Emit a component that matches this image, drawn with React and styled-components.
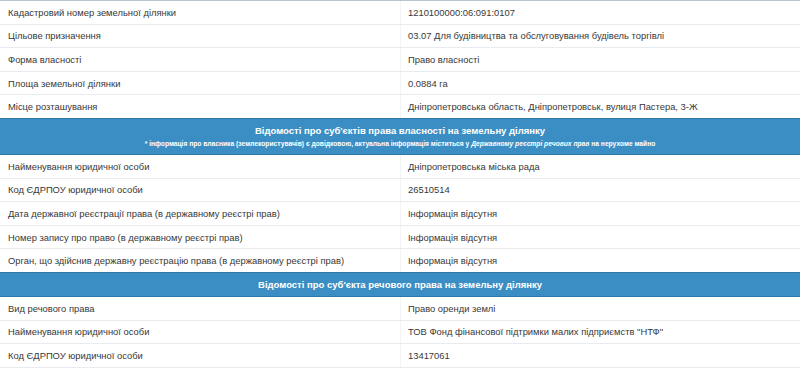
import React from "react";
import styled, { createGlobalStyle } from "styled-components";

const Global = createGlobalStyle`
  html, body { margin: 0; padding: 0; background: #ffffff; }
  body { font-family: "Liberation Sans", Arial, sans-serif; color: #383838; }
`;

const Table = styled.div`
  width: 800px;
  border-top: 1px solid #b9c6cf;
  font-size: 9.4px;
`;

const Row = styled.div`
  display: grid;
  grid-template-columns: 400px 1fr;
  border-bottom: 1px solid #e9ecee;
  height: 23.6px;
  box-sizing: border-box;
`;

const Cell = styled.div`
  padding: 0 7px 0 ${(p) => (p.$right ? "7px" : "8px")};
  display: flex;
  align-items: center;
  white-space: nowrap;
  border-left: ${(p) => (p.$right ? "1px solid #f1f3f4" : "none")};
`;

const Section = styled.div`
  background: #3b8ec3;
  border-top: 1px solid #2e78a6;
  border-bottom: 1px solid #2e78a6;
  color: #ffffff;
  text-align: center;
  display: flex;
  flex-direction: column;
  justify-content: center;
  box-sizing: border-box;
  height: ${(p) => p.$h}px;
  margin-top: -1px;
`;

const SectionTitle = styled.div`
  font-weight: bold;
  font-size: 9.5px;
  line-height: 13px;
`;

const SectionNote = styled.div`
  font-weight: bold;
  font-size: 6.7px;
  line-height: 9px;
  margin-top: 2px;
  em { font-style: italic; }
`;

const rows1 = [
  ["Кадастровий номер земельної ділянки", "1210100000:06:091:0107"],
  ["Цільове призначення", "03.07 Для будівництва та обслуговування будівель торгівлі"],
  ["Форма власності", "Право власності"],
  ["Площа земельної ділянки", "0.0884 га"],
  ["Місце розташування", "Дніпропетровська область, Дніпропетровськ, вулиця Пастера, 3-Ж"],
];

const rows2 = [
  ["Найменування юридичної особи", "Дніпропетровська міська рада"],
  ["Код ЄДРПОУ юридичної особи", "26510514"],
  ["Дата державної реєстрації права (в державному реєстрі прав)", "Інформація відсутня"],
  ["Номер запису про право (в державному реєстрі прав)", "Інформація відсутня"],
  ["Орган, що здійснив державну реєстрацію права (в державному реєстрі прав)", "Інформація відсутня"],
];

const rows3 = [
  ["Вид речового права", "Право оренди землі"],
  ["Найменування юридичної особи", "ТОВ Фонд фінансової підтримки малих підприємств \"НТФ\""],
  ["Код ЄДРПОУ юридичної особи", "13417061"],
];

const Rows = ({ data }) =>
  data.map(([k, v], i) => (
    <Row key={i}>
      <Cell>{k}</Cell>
      <Cell $right>{v}</Cell>
    </Row>
  ));

export default function App() {
  return (
    <>
      <Global />
      <Table>
        <Rows data={rows1} />
        <Section $h={37}>
          <SectionTitle>Відомості про суб'єктів права власності на земельну ділянку</SectionTitle>
          <SectionNote>
            * інформація про власника (землекористувачів) є довідковою, актуальна інформація міститься у{" "}
            <em>Державному реєстрі речових прав</em> на нерухоме майно
          </SectionNote>
        </Section>
        <Rows data={rows2} />
        <Section $h={25}>
          <SectionTitle>Відомості про суб'єкта речового права на земельну ділянку</SectionTitle>
        </Section>
        <Rows data={rows3} />
      </Table>
    </>
  );
}
